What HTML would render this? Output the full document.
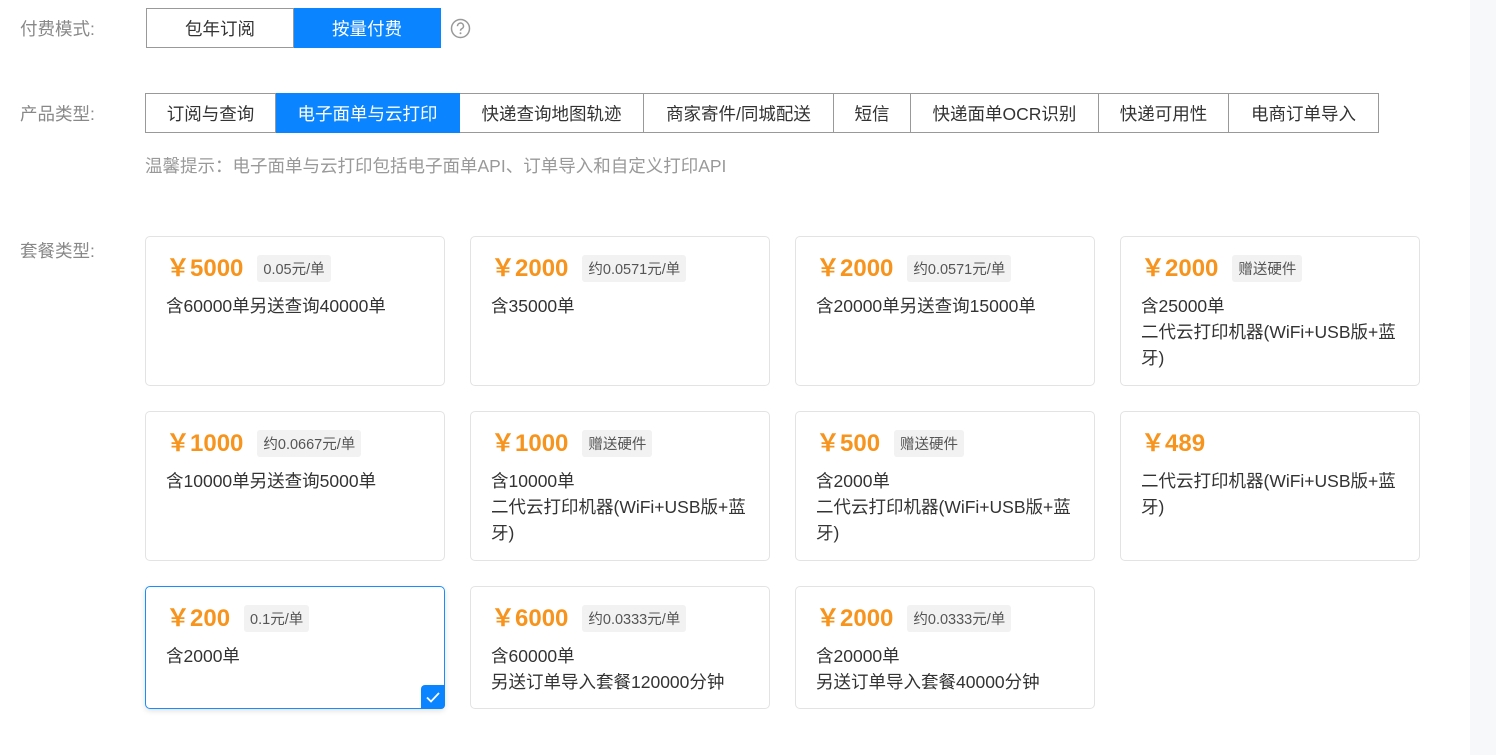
<!DOCTYPE html><html><head><meta charset="utf-8"><style>
body{margin:0;width:1496px;height:755px;background:#fff;font-family:"Liberation Sans","Noto Sans CJK SC",sans-serif;position:relative;overflow:hidden}
.strip{position:absolute;left:1470px;top:0;width:26px;height:755px;background:#f7f8fa}
.lbl{position:absolute;left:20px;font-size:17.5px;color:#888}
.tabs{position:absolute;display:flex;height:40px}
.tabs div{box-sizing:border-box;border:1px solid #999;border-left:none;display:flex;align-items:center;justify-content:center;font-size:17.5px;color:#333;height:40px}
.tabs div:first-child{border-left:1px solid #999}
.tabs div.on{background:#0a84ff;color:#fff;border-color:#0a84ff}
.card{position:absolute;width:300px;box-sizing:border-box;border:1px solid #e3e3e3;border-radius:5px;padding:11px 0 0 20px}
.card.sel{border-color:#1a8cff;box-shadow:0 2px 6px rgba(0,0,0,.12)}
.p{display:flex;align-items:center;height:34px}
.p b{color:#f7941d;font-size:24px;font-weight:bold}
.p span{margin-left:14px;margin-top:6px;background:#f2f2f2;color:#555;font-size:14.5px;padding:3px 6px;border-radius:3px}
.d{font-size:17.5px;color:#333;line-height:26px;margin-top:11px;padding-right:20px}
.chk{position:absolute;right:-1px;bottom:-1px;width:24px;height:24px;background:#0a84ff;border-radius:4px 0 4px 0}
</style></head><body>
<div class="strip"></div>
<div class="lbl" style="top:16px">付费模式:</div>
<div class="tabs" style="left:146px;top:8px"><div style="width:148px">包年订阅</div><div class="on" style="width:147px">按量付费</div></div>
<svg style="position:absolute;left:450px;top:18px" width="21" height="21" viewBox="0 0 21 21"><circle cx="10.5" cy="10.5" r="9" fill="none" stroke="#999" stroke-width="1.5"/><path d="M7.5 8.2a3 3 0 1 1 4.2 2.6c-.9.4-1.2 1-1.2 2" fill="none" stroke="#999" stroke-width="1.5"/><circle cx="10.5" cy="15.3" r="1" fill="#999"/></svg>
<div class="lbl" style="top:101px">产品类型:</div>
<div class="tabs" style="left:145px;top:93px"><div style="width:131px">订阅与查询</div><div class="on" style="width:184px">电子面单与云打印</div><div style="width:184px">快递查询地图轨迹</div><div style="width:190px">商家寄件/同城配送</div><div style="width:77px">短信</div><div style="width:188px">快递面单OCR识别</div><div style="width:130px">快递可用性</div><div style="width:150px">电商订单导入</div></div>
<div style="position:absolute;left:145px;top:153px;font-size:17.5px;color:#999">温馨提示：电子面单与云打印包括电子面单API、订单导入和自定义打印API</div>
<div class="lbl" style="top:238px">套餐类型:</div>

<div class="card" style="left:145px;top:236px;height:150px"><div class="p"><b>￥5000</b><span>0.05元/单</span></div><div class="d">含60000单另送查询40000单</div></div>
<div class="card" style="left:470px;top:236px;height:150px"><div class="p"><b>￥2000</b><span>约0.0571元/单</span></div><div class="d">含35000单</div></div>
<div class="card" style="left:795px;top:236px;height:150px"><div class="p"><b>￥2000</b><span>约0.0571元/单</span></div><div class="d">含20000单另送查询15000单</div></div>
<div class="card" style="left:1120px;top:236px;height:150px"><div class="p"><b>￥2000</b><span>赠送硬件</span></div><div class="d">含25000单<br>二代云打印机器(WiFi+USB版+蓝牙)</div></div>

<div class="card" style="left:145px;top:411px;height:150px"><div class="p"><b>￥1000</b><span>约0.0667元/单</span></div><div class="d">含10000单另送查询5000单</div></div>
<div class="card" style="left:470px;top:411px;height:150px"><div class="p"><b>￥1000</b><span>赠送硬件</span></div><div class="d">含10000单<br>二代云打印机器(WiFi+USB版+蓝牙)</div></div>
<div class="card" style="left:795px;top:411px;height:150px"><div class="p"><b>￥500</b><span>赠送硬件</span></div><div class="d">含2000单<br>二代云打印机器(WiFi+USB版+蓝牙)</div></div>
<div class="card" style="left:1120px;top:411px;height:150px"><div class="p"><b>￥489</b></div><div class="d">二代云打印机器(WiFi+USB版+蓝牙)</div></div>

<div class="card sel" style="left:145px;top:586px;height:123px"><div class="p"><b>￥200</b><span>0.1元/单</span></div><div class="d">含2000单</div><div class="chk"><svg width="24" height="24" viewBox="0 0 24 24"><path d="M6 12.5l4 4 8-8.5" fill="none" stroke="#fff" stroke-width="1.8"/></svg></div></div>
<div class="card" style="left:470px;top:586px;height:123px"><div class="p"><b>￥6000</b><span>约0.0333元/单</span></div><div class="d">含60000单<br>另送订单导入套餐120000分钟</div></div>
<div class="card" style="left:795px;top:586px;height:123px"><div class="p"><b>￥2000</b><span>约0.0333元/单</span></div><div class="d">含20000单<br>另送订单导入套餐40000分钟</div></div>
</body></html>
